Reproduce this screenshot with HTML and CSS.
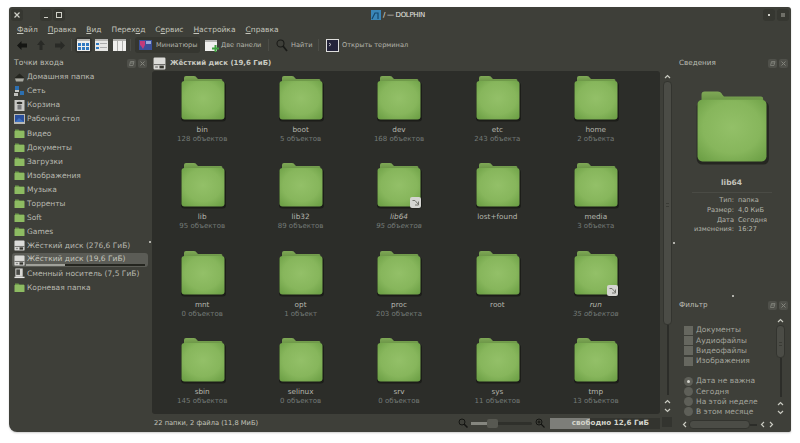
FILE: index.html
```html
<!DOCTYPE html>
<html lang="ru">
<head>
<meta charset="utf-8">
<title>Dolphin</title>
<link rel="stylesheet" href="styles.css">
</head>
<body>
<svg class="defs" width="0" height="0">
  <defs>
    <radialGradient id="fb" cx=".5" cy=".45" r=".7"><stop offset="0" stop-color="#93c068"/><stop offset=".6" stop-color="#87b65c"/><stop offset="1" stop-color="#6c9f45"/></radialGradient>
    <linearGradient id="ft" x1="0" y1="0" x2="0" y2="1"><stop offset="0" stop-color="#7fa856"/><stop offset="1" stop-color="#5f8a3d"/></linearGradient>
    <symbol id="folder" viewBox="0 0 46 48">
      <rect x="1" y="7" width="45" height="39.500" rx="3.500" fill="#0c0d0a" opacity=".5"/>
      <path d="M4 8 V3 Q4 1 6 1 H14 Q16 1 17 3 L18 4 H41 Q42.500 4 42.500 6 V10 H4Z" fill="url(#ft)"/>
      <rect x="1.500" y="6" width="43" height="38.500" rx="3" fill="url(#fb)"/>
    </symbol>
    <symbol id="mini" viewBox="0 0 11 11">
      <path d="M1 1.500 H4.500 L5.500 2.500 H10 V10 H1Z" fill="#6f9c4a"/><rect x=".5" y="3" width="10" height="7" rx=".6" fill="#8dbb62"/>
    </symbol>
    <symbol id="drive" viewBox="0 0 12 12">
      <rect x=".5" y=".5" width="11" height="11" rx="1" fill="#dcdcd9"/><rect x=".5" y="6.500" width="11" height="1" fill="#6a6a66"/><rect x="6" y="8" width="4" height="2.500" fill="#35352f"/><rect x="2" y="8.500" width="2.500" height="1.500" fill="#8a8a86"/>
    </symbol>
    <symbol id="removable" viewBox="0 0 12 12">
      <rect x="1.500" y=".5" width="8" height="9" fill="#d8d8d5"/><rect x="2.500" y="1.500" width="4" height="6" fill="#4a4b47"/><rect x=".5" y="9.500" width="11" height="1.500" fill="#e6e6e3"/>
    </symbol>
    <symbol id="up" viewBox="0 0 7 5"><path d="M1 4 L3.500 1.500 L6 4" fill="none" stroke="#c9cac1" stroke-width="1.200"/></symbol>
    <symbol id="down" viewBox="0 0 7 5"><path d="M1 1 L3.500 3.500 L6 1" fill="none" stroke="#c9cac1" stroke-width="1.200"/></symbol>
    <symbol id="left" viewBox="0 0 5 7"><path d="M4 1 L1.500 3.500 L4 6" fill="none" stroke="#c9cac1" stroke-width="1.200"/></symbol>
    <symbol id="right" viewBox="0 0 5 7"><path d="M1 1 L3.500 3.500 L1 6" fill="none" stroke="#c9cac1" stroke-width="1.200"/></symbol>
    <symbol id="float" viewBox="0 0 9 9"><path d="M2.500 6.500 L3.500 2.500 H7 L6 6.500Z M3 4 H7" fill="none" stroke="#84857d" stroke-width=".8"/></symbol>
    <symbol id="close" viewBox="0 0 9 9"><path d="M2.500 2.500 L6.500 6.500 M6.500 2.500 L2.500 6.500" stroke="#84857d" stroke-width="1"/></symbol>
    <symbol id="link" viewBox="0 0 11 11"><path d="M2.500 3.500 H5 L8.500 7.500 M8.500 4.500 V8 H5" fill="none" stroke="#74756e" stroke-width="1"/></symbol>
  </defs>
</svg>
<div class="window">
  <header class="titlebar">
    <div class="tb-group">
      <span class="wbtn"><svg width="8" height="8" viewBox="0 0 8 8"><path d="M1.500 1.500 L6.500 6.500 M6.500 1.500 L1.500 6.500" stroke="#d0d0c8" stroke-width="1.200"/></svg></span>
      <span class="wgap"></span>
      <span class="wbtn"><svg width="8" height="8" viewBox="0 0 8 8"><path d="M2 6.500 H6" stroke="#d0d0c8"/></svg></span>
      <span class="wbtn"><svg width="8" height="8" viewBox="0 0 8 8"><rect x="1.500" y="1.500" width="5" height="5" fill="none" stroke="#d0d0c8"/></svg></span>
    </div>
    <div class="title">
      <svg class="title-icon" width="10" height="10" viewBox="0 0 10 10"><rect width="10" height="10" fill="#3a86b8"/><path d="M1 9 L4 3 H7 V9" fill="none" stroke="#15486e" stroke-width="1.200"/></svg>
      <span>/ — DOLPHIN</span>
    </div>
    <div class="tb-group tb-right">
      <span class="wbtn"><svg width="8" height="8" viewBox="0 0 8 8"><rect x="3" y="3" width="2" height="2" fill="#d0d0c8"/></svg></span>
      <span class="wbtn"><svg width="8" height="8" viewBox="0 0 8 8"><path d="M2 3 H6 M2 5 H6" stroke="#a8a8a0"/></svg></span>
    </div>
  </header>
  <nav class="menu">
    <span><u>Ф</u>айл</span><span><u>П</u>равка</span><span><u>В</u>ид</span><span>Перех<u>о</u>д</span><span>С<u>е</u>рвис</span><span><u>Н</u>астройка</span><span><u>С</u>правка</span>
  </nav>
  <div class="toolbar">
    <div class="nav-arrows">
      <svg width="10" height="9" viewBox="0 0 10 9"><path d="M0 4.500 L4.500 0 V2.500 H10 V6.500 H4.500 V9Z" fill="#151613"/></svg>
      <svg width="8" height="10" viewBox="0 0 8 10"><path d="M4 0 L8 5 H5.500 V10 H2.500 V5 H0Z" fill="#292a26"/></svg>
      <svg width="10" height="9" viewBox="0 0 10 9"><path d="M10 4.500 L5.500 0 V2.500 H0 V6.500 H5.500 V9Z" fill="#292a26"/></svg>
    </div>
    <i class="sep"></i>
    <div class="views">
      <span class="vbtn vbtn-on"><svg width="13" height="12" viewBox="0 0 13 12"><rect width="13" height="12" fill="#eeeeec"/><rect width="13" height="2" fill="#b5b5b2"/><path d="M1 4h3v3H1zM5 4h3v3H5zM9 4h3v3H9zM1 8h3v3H1zM5 8h3v3H5zM9 8h3v3H9z" fill="#2f78c0"/></svg></span>
      <span class="vbtn"><svg width="13" height="12" viewBox="0 0 13 12"><rect width="13" height="12" fill="#e6e6e4"/><rect width="13" height="2" fill="#b5b5b2"/><path d="M1 4h3v2H1zM1 8h3v2H1z" fill="#2f78c0"/><path d="M5 4h7v1H5zM5 8h7v1H5z" fill="#aaa"/></svg></span>
      <span class="vbtn"><svg width="13" height="12" viewBox="0 0 13 12"><rect width="13" height="12" fill="#f0f0ee"/><path d="M0 0h13v2H0zM4 2h1v10H4zM9 2h1v10H9z" fill="#b0b0ad"/></svg></span>
    </div>
    <i class="sep sep-t"></i>
    <span class="tbtn tbtn-on"><svg width="13" height="10" viewBox="0 0 13 10"><rect width="13" height="10" fill="#3b4f9a"/><path d="M1 1h5v4L4 9 2 6 1 5z" fill="#c23a7a"/><path d="M7 1h5v3H7z" fill="#9aa9d8"/></svg>Миниатюры</span>
    <span class="tbtn tbtn-two"><svg width="14" height="13" viewBox="0 0 14 13"><path d="M0 1h12v11H0z" fill="#f0f0ee"/><path d="M0 1h12v2H0z" fill="#b8b8b5"/><path d="M9.500 6h2v2.500H14v2h-2.500V13h-2v-2.500H7v-2h2.500z" fill="#3fa03f"/></svg>Две панели</span>
    <i class="sep sep-s"></i>
    <span class="tbtn tbtn-find"><svg width="12" height="13" viewBox="0 0 12 13"><circle cx="4.500" cy="4.500" r="3.500" fill="none" stroke="#1a1b18" stroke-width="1.100"/><path d="M7 7 L11 12" stroke="#1a1b18" stroke-width="1.800"/></svg>Найти</span>
    <i class="sep sep-s"></i>
    <span class="tbtn tbtn-term"><svg width="13" height="13" viewBox="0 0 13 13"><rect width="13" height="13" fill="#dededc"/><rect x="1" y="1" width="11" height="11" fill="#23233a"/><path d="M3 4l2 1.500-2 1.500" fill="none" stroke="#ddd" stroke-width=".8"/></svg>Открыть терминал</span>
  </div>
  <div class="main">
    <aside class="places">
      <div class="phead"><span>Точки входа</span><span class="pbtns"><svg width="9" height="9"><use href="#float"/></svg><svg width="9" height="9"><use href="#close"/></svg></span></div>
      <ul class="plist">
        <li><svg width="11" height="11" viewBox="0 0 11 11"><path d="M5.500 1.500 L10.500 6 H.5Z" fill="#24251f"/><path d="M1 6.500 H10 L9 9.500 H2Z" fill="#a9aaa2"/></svg>Домашняя папка</li>
        <li><svg width="11" height="11" viewBox="0 0 11 11"><rect x="1" y="0" width="4" height="4" fill="#2c6fb0"/><rect x="1" y="4" width="4" height="2" fill="#c9c9c5"/><rect x="6" y="5" width="4" height="4" fill="#2c6fb0"/><rect x="0" y="7" width="4" height="3" fill="#bfbfbb"/></svg>Сеть</li>
        <li><svg width="11" height="11" viewBox="0 0 11 11"><rect x=".5" y="0" width="10" height="11" fill="#c9c9c6"/><ellipse cx="5.500" cy="3" rx="3" ry="1.300" fill="#33342f"/><rect x="3.500" y="5" width="4" height="4.500" fill="#77787a"/></svg>Корзина</li>
        <li><svg width="11" height="11" viewBox="0 0 11 11"><rect width="11" height="10" fill="#b8b8b4"/><rect x="1" y="1" width="9" height="7" fill="#2a4f9c"/><path d="M1 8 L5 4 L10 8Z" fill="#3d70c0"/></svg>Рабочий стол</li>
        <li><svg width="11" height="11"><use href="#mini"/></svg>Видео</li>
        <li><svg width="11" height="11"><use href="#mini"/></svg>Документы</li>
        <li><svg width="11" height="11"><use href="#mini"/></svg>Загрузки</li>
        <li><svg width="11" height="11"><use href="#mini"/></svg>Изображения</li>
        <li><svg width="11" height="11"><use href="#mini"/></svg>Музыка</li>
        <li><svg width="11" height="11"><use href="#mini"/></svg>Торренты</li>
        <li><svg width="11" height="11"><use href="#mini"/></svg>Soft</li>
        <li><svg width="11" height="11"><use href="#mini"/></svg>Games</li>
        <li><svg width="11" height="11"><use href="#drive"/></svg>Жёсткий диск (276,6 ГиБ)</li>
        <li class="sel"><svg width="11" height="11"><use href="#drive"/></svg>Жёсткий диск (19,6 ГиБ)<i class="cap"><i></i></i></li>
        <li><svg width="11" height="11"><use href="#removable"/></svg>Сменный носитель (7,5 ГиБ)</li>
        <li><svg width="11" height="11"><use href="#mini"/></svg>Корневая папка</li>
      </ul>
      <i class="handle handle-left"></i>
    </aside>
    <section class="center">
      <div class="chead"><svg width="13" height="13"><use href="#drive"/></svg><strong>Жёсткий диск (19,6 ГиБ)</strong></div>
      <div class="view">
        <div class="grid">
          <div class="item"><svg class="fi" width="46" height="48"><use href="#folder"/></svg><p>bin</p><small>128 объектов</small></div>
          <div class="item"><svg class="fi" width="46" height="48"><use href="#folder"/></svg><p>boot</p><small>5 объектов</small></div>
          <div class="item"><svg class="fi" width="46" height="48"><use href="#folder"/></svg><p>dev</p><small>168 объектов</small></div>
          <div class="item"><svg class="fi" width="46" height="48"><use href="#folder"/></svg><p>etc</p><small>243 объекта</small></div>
          <div class="item"><svg class="fi" width="46" height="48"><use href="#folder"/></svg><p>home</p><small>2 объекта</small></div>
          <div class="item"><svg class="fi" width="46" height="48"><use href="#folder"/></svg><p>lib</p><small>95 объектов</small></div>
          <div class="item"><svg class="fi" width="46" height="48"><use href="#folder"/></svg><p>lib32</p><small>89 объектов</small></div>
          <div class="item link"><svg class="fi" width="46" height="48"><use href="#folder"/></svg><span class="badge"><svg width="11" height="11"><use href="#link"/></svg></span><p><em>lib64</em></p><small><em>95 объектов</em></small></div>
          <div class="item"><svg class="fi" width="46" height="48"><use href="#folder"/></svg><p>lost+found</p></div>
          <div class="item"><svg class="fi" width="46" height="48"><use href="#folder"/></svg><p>media</p><small>3 объекта</small></div>
          <div class="item"><svg class="fi" width="46" height="48"><use href="#folder"/></svg><p>mnt</p><small>0 объектов</small></div>
          <div class="item"><svg class="fi" width="46" height="48"><use href="#folder"/></svg><p>opt</p><small>1 объект</small></div>
          <div class="item"><svg class="fi" width="46" height="48"><use href="#folder"/></svg><p>proc</p><small>203 объекта</small></div>
          <div class="item"><svg class="fi" width="46" height="48"><use href="#folder"/></svg><p>root</p></div>
          <div class="item link"><svg class="fi" width="46" height="48"><use href="#folder"/></svg><span class="badge"><svg width="11" height="11"><use href="#link"/></svg></span><p><em>run</em></p><small><em>35 объектов</em></small></div>
          <div class="item"><svg class="fi" width="46" height="48"><use href="#folder"/></svg><p>sbin</p><small>145 объектов</small></div>
          <div class="item"><svg class="fi" width="46" height="48"><use href="#folder"/></svg><p>selinux</p><small>0 объектов</small></div>
          <div class="item"><svg class="fi" width="46" height="48"><use href="#folder"/></svg><p>srv</p><small>0 объектов</small></div>
          <div class="item"><svg class="fi" width="46" height="48"><use href="#folder"/></svg><p>sys</p><small>11 объектов</small></div>
          <div class="item"><svg class="fi" width="46" height="48"><use href="#folder"/></svg><p>tmp</p><small>13 объектов</small></div>
        </div>
      </div>
      <div class="status">
        <span class="status-text">22 папки, 2 файла (11,8 МиБ)</span>
        <svg class="zoom-ic" width="10" height="10" viewBox="0 0 10 10"><circle cx="4" cy="4" r="3" fill="none" stroke="#141512"/><path d="M6 6l3.500 3.500" stroke="#141512" stroke-width="1.500"/></svg>
        <span class="slider"><i class="slider-fill"></i><i class="slider-thumb"></i></span>
        <svg class="zoom-ic" width="10" height="10" viewBox="0 0 10 10"><circle cx="4" cy="4" r="3" fill="none" stroke="#141512"/><path d="M6 6l3.500 3.500M2.500 4h3M4 2.500v3" stroke="#141512" stroke-width="1.100"/></svg>
        <span class="free"><i></i><b>свободно 12,6 ГиБ</b></span>
      </div>
    </section>
    <div class="vscroll vscroll-main">
      <svg class="arr" width="7" height="9"><use href="#up"/></svg><i class="thumb"></i><i class="rail"></i><svg class="arr" width="7" height="9"><use href="#up"/></svg><svg class="arr" width="7" height="9"><use href="#down"/></svg>
      <i class="corner"></i>
    </div>
    <aside class="side">
      <div class="phead phead-side"><span>Сведения</span><span class="pbtns"><svg width="9" height="9"><use href="#float"/></svg><svg width="9" height="9"><use href="#close"/></svg></span></div>
      <div class="info">
        <svg class="info-icon" width="74" height="77"><use href="#folder"/></svg>
        <div class="info-name">lib64</div>
        <dl class="props">
          <dt>Тип:</dt><dd>папка</dd>
          <dt>Размер:</dt><dd>4,0 КиБ</dd>
          <dt>Дата<br>изменения:</dt><dd>Сегодня<br>16:27</dd>
        </dl>
      </div>
      <i class="handle handle-mid"></i>
      <i class="handle handle-side"></i>
      <div class="phead phead-side"><span>Фильтр</span><span class="pbtns"><svg width="9" height="9"><use href="#float"/></svg><svg width="9" height="9"><use href="#close"/></svg></span></div>
      <div class="filter">
        <div class="filter-list">
          <label><i class="cb"></i>Документы</label>
          <label><i class="cb"></i>Аудиофайлы</label>
          <label><i class="cb"></i>Видеофайлы</label>
          <label><i class="cb"></i>Изображения</label>
          <label class="first-radio"><i class="rb rb-on"></i>Дата не важна</label>
          <label><i class="rb"></i>Сегодня</label>
          <label><i class="rb"></i>На этой неделе</label>
          <label><i class="rb"></i>В этом месяце</label>
        </div>
        <div class="vscroll vscroll-filter">
          <svg class="arr" width="7" height="9"><use href="#up"/></svg><i class="thumb"></i><i class="rail"></i><svg class="arr" width="7" height="9"><use href="#up"/></svg><svg class="arr" width="7" height="9"><use href="#down"/></svg>
        </div>
      </div>
      <div class="hscroll"><svg width="5" height="7"><use href="#left"/></svg><i class="hthumb"></i><i class="hrail"></i><svg width="5" height="7"><use href="#left"/></svg><svg width="5" height="7"><use href="#right"/></svg></div>
    </aside>
  </div>
</div>
</body>
</html>
```
FILE: styles.css
```css
* { box-sizing: border-box; margin: 0; padding: 0; }
html, body { width: 800px; height: 443px; overflow: hidden; background: #fff; }
body { font-family: "DejaVu Sans", sans-serif; font-size: 7.5px; color: #c4c5bc; line-height: 1; }
.defs { position: absolute; }
i { font-style: normal; display: block; }
ul { list-style: none; }

.window { width: 782px; height: 425px; margin: 7px 9px 0; background: #3e3f39; border-radius: 3px 3px 2px 8px; display: flex; flex-direction: column; overflow: hidden; box-shadow: 0 1px 2px rgba(0,0,0,.2); }

.titlebar { height: 15px; flex: none; display: flex; justify-content: space-between; align-items: center; padding: 1px 2px 0; }
.tb-group { display: flex; align-items: center; gap: 1px; }
.tb-right { gap: 2px; }
.wbtn { width: 12px; height: 12px; background: #363731; border-radius: 3px; display: flex; align-items: center; justify-content: center; }
.wgap { width: 15px; }
.title { display: flex; align-items: center; gap: 2px; color: #e6e6e0; font-size: 7px; margin-left: -32px; letter-spacing: -.3px; }
.menu { height: 14px; flex: none; display: flex; align-items: center; gap: 10px; padding: 1px 0 0 8px; }
.menu u { text-decoration-thickness: 1px; }

.toolbar { height: 18px; flex: none; display: flex; align-items: center; padding: 0 0 0 8px; font-size: 6.6px; color: #b4b5ac; }
.toolbar svg { flex: none; }
.nav-arrows { display: flex; align-items: center; gap: 10px; width: 54px; }
.sep { width: 1px; height: 12px; background: #4c4d47; flex: none; margin-right: 5px; }
.sep-t { margin-right: 4px; }
.views { display: flex; gap: 5px; width: 53px; align-items: center; }
.vbtn { display: flex; }
.vbtn-on { box-shadow: 0 0 0 2px #333430; border-radius: 2px; }
.tbtn { display: flex; align-items: center; gap: 3px; height: 16px; white-space: nowrap; flex: none; }
.tbtn-on { background: #353630; border-radius: 3px; padding: 0 3px 0 4px; width: 65px; margin-right: 5px; gap: 4px; }
.tbtn-two { width: 63px; gap: 2px; }
.sep-s { margin-right: 7px; }
.tbtn-find { width: 42px; gap: 3px; }

.main { flex: 1; min-height: 0; display: flex; }

.places { width: 143px; flex: none; position: relative; }
.phead { height: 17px; display: flex; align-items: center; justify-content: space-between; padding: 1px 5px 0; font-size: 7.7px; color: #bbbcb3; }
.pbtns { display: flex; gap: 2px; }
.pbtns svg { background: #4f504a; border-radius: 2px; }
.plist { display: flex; flex-direction: column; margin-top: -1px; }
.plist li { height: 14.07px; display: flex; align-items: center; gap: 1px; padding-left: 5px; white-space: nowrap; position: relative; color: #b9bab1; }
.plist svg { flex: none; margin-right: 1px; }
.plist .sel { margin: 0 4px 0 3px; padding-left: 2px; background: #5b5c56; border-radius: 3px; align-items: flex-start; padding-top: 2px; color: #c4c5bc; }
.cap { position: absolute; left: 14px; right: 3px; bottom: 1px; height: 2px; background: #24251f; }
.cap i { width: 33%; height: 2px; background: #a0a19a; }
.handle { width: 2px; height: 2px; background: #d8d8d2; border-radius: 1px; position: absolute; }
.handle-left { right: 1px; top: 187px; }

.center { width: 508px; flex: none; display: flex; flex-direction: column; }
.chead { height: 17px; flex: none; display: flex; align-items: center; gap: 4px; padding: 1px 0 0 1px; }
.chead strong { font-size: 7px; color: #c9cac1; }
.view { height: 343px; flex: none; background: #2c2d29; border-radius: 3px; overflow: hidden; padding: 4px 0 0 1px; }
.grid { display: grid; grid-template-columns: repeat(5, 98.4px); grid-auto-rows: 87.35px; }
.item { display: flex; flex-direction: column; align-items: center; position: relative; color: #b4b5ac; }
.fi { flex: none; margin: 0 0 2px 1px; }
.item p { font-size: 7.3px; line-height: 10px; }
.item small { font-size: 7px; line-height: 9px; color: #747b78; }
.badge { position: absolute; left: 60px; top: 35px; width: 11px; height: 11px; background: #d5d5d2; border-radius: 2px; display: flex; }
.status { flex: 1; display: flex; align-items: center; padding-left: 2px; font-size: 6.7px; }
.status-text { width: 304px; color: #c4c5bc; }
.zoom-ic { flex: none; }
.slider { width: 61px; height: 3px; background: #2f302b; position: relative; margin: 0 3px; border-radius: 2px; flex: none; }
.slider-fill { width: 16px; height: 3px; background: #85867f; }
.slider-thumb { position: absolute; left: 16px; top: -3px; width: 11px; height: 9px; background: #575851; border-radius: 2px; }
.free { width: 110px; height: 11px; margin-left: 5px; background: #33342f; position: relative; display: flex; align-items: center; justify-content: flex-end; padding-right: 11px; flex: none; }
.free i { position: absolute; left: 0; top: 0; bottom: 0; width: 40px; background: #7d7e79; }
.free b { position: relative; color: #d2d3ca; font-size: 7.2px; }

.vscroll { width: 9px; flex: none; display: flex; flex-direction: column; align-items: center; position: relative; }
.vscroll-main { margin-left: 3px; padding-top: 18px; }
.arr { flex: none; }
.thumb { width: 9px; background: #4b4c46; border: 1px solid #33342f; border-radius: 4px; flex: none; position: relative; }
.thumb::after { content: ""; position: absolute; left: 2px; right: 2px; top: 50%; height: 2px; border-top: 1px solid #3a3b35; border-bottom: 1px solid #3a3b35; }
.rail { width: 2px; background: #2c2d29; flex: none; margin-bottom: 2px; }
.vscroll-main .thumb { height: 244px; }
.vscroll-main .rail { height: 70px; }
.corner { position: absolute; left: -1px; top: 363px; width: 10px; height: 10px; background: #33342f; }

.side { flex: 1; min-width: 0; position: relative; display: flex; flex-direction: column; }
.phead-side { height: 17px; padding: 1px 3px 0 7px; flex: none; font-size: 7.2px; }
.info { height: 225px; flex: none; display: flex; flex-direction: column; align-items: center; padding-top: 19px; }
.info-icon { flex: none; margin-left: 1px; }
.info-name { font-weight: bold; font-size: 7.5px; margin-top: 12px; padding-bottom: 5px; border-bottom: 1px solid #4a4b45; width: 80px; text-align: center; }
.props { align-self: flex-start; display: grid; grid-template-columns: 62px 50px; column-gap: 4px; font-size: 6.6px; line-height: 8.5px; row-gap: 1.5px; margin-top: 3.5px; color: #b4b5ac; }
.props dt { text-align: right; }
.handle-mid { left: 60px; top: 241px; }
.handle-side { left: 1px; top: 188px; }
.filter { flex: 1; min-height: 0; display: flex; padding: 0 5px 0 12px; overflow: hidden; }
.filter-list { width: 92px; flex: none; display: flex; flex-direction: column; padding-top: 12px; }
.filter-list label { display: flex; align-items: center; gap: 3px; height: 10.3px; flex: none; white-space: nowrap; color: #a4a59d; }
.cb { width: 9px; height: 9px; background: #66675f; flex: none; }
.rb { width: 9px; height: 9px; border-radius: 50%; background: #5e5f58; flex: none; position: relative; }
.rb-on::after { content: ""; display: block; width: 3px; height: 3px; border-radius: 50%; background: #d4d4cc; margin: 3px; }
.first-radio { margin-top: 9.7px; }
.vscroll-filter { padding-top: 3px; }
.vscroll-filter .thumb { height: 33px; }
.vscroll-filter .rail { height: 39px; }
.hscroll { height: 15px; flex: none; display: flex; align-items: center; padding-left: 10px; }
.hscroll svg { flex: none; }
.hthumb { width: 61px; height: 9px; background: #4b4c46; border: 1px solid #33342f; border-radius: 4px; margin-left: 2px; }
.hrail { width: 7px; height: 2px; background: #2c2d29; margin-right: 3px; }
.hscroll svg:last-child { margin-left: 4px; }
```
